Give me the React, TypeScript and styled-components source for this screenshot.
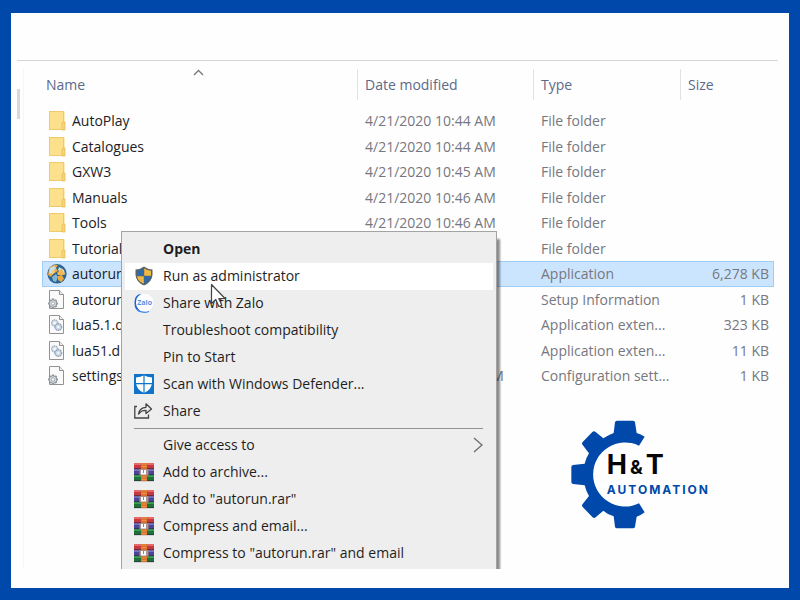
import React from "react";
import styled, { createGlobalStyle, css } from "styled-components";

const GlobalStyle = createGlobalStyle`
  * { box-sizing: border-box; }
  body { margin: 0; background: #fff; }
`;

const Frame = styled.main`
  min-height: 100vh;
  display: flex;
  flex-direction: column;
  padding: 47px 11px 19px 6px;
  border: solid #0049ab;
  border-width: 13px 11px 12px;
  background: #fefefe;
  font-family: "Open Sans", "Noto Sans", sans-serif;
  font-size: 14px;
  line-height: 20px;
  color: #1c1c26;
`;

const Explorer = styled.section`
  position: relative;
  flex: 1;
  display: flex;
  border-top: 1px solid #d6d6d6;
  overflow: hidden;
`;

const ScrollGutter = styled.div`
  width: 7px;
  flex: none;
  margin-top: 8px;
  padding-top: 20px;
  border-right: 1px solid #f6f6f6;
`;

const ScrollThumb = styled.div`
  width: 3px;
  height: 30px;
  background: #d9d9d9;
`;

const Content = styled.div`
  flex: 1;
  min-width: 0;
  display: flex;
  flex-direction: column;
  padding: 0 4px 0 18px;
`;

const FileTable = styled.table`
  width: 100%;
  table-layout: fixed;
  border-collapse: collapse;
`;

const Column = styled.col<{ $width?: number }>`
  width: ${(p) => (p.$width ? `${p.$width}px` : "auto")};
`;

const HeadCell = styled.th`
  height: 47px;
  padding: 0;
  font-weight: 400;
  text-align: left;
  color: #5b6a8a;
`;

const HeadLabel = styled.div<{ $first?: boolean }>`
  position: relative;
  height: 31px;
  padding: 6px 0 0 ${(p) => (p.$first ? 3 : 7)}px;
  border-left: 1px solid ${(p) => (p.$first ? "transparent" : "#e2e2e2")};
`;

const SortArrow = styled.svg`
  position: absolute;
  top: 0;
  left: 50%;
  width: 11px;
  height: 7px;
  margin-left: -7px;
`;

const FileRow = styled.tr<{ $selected?: boolean }>`
  height: 25px;
  &:nth-child(odd) { height: 26px; }
  ${(p) =>
    p.$selected &&
    css`
      background: #cce5ff;
      outline: 1px solid #a0cdf5;
      outline-offset: -1px;
    `}
`;

const Cell = styled.td<{ $right?: boolean }>`
  padding: 0 ${(p) => (p.$right ? 5 : 0)}px 0 8px;
  text-align: ${(p) => (p.$right ? "right" : "left")};
  color: #777780;
  white-space: nowrap;
`;

const NameCell = styled.td`
  padding: 0 0 0 5px;
`;

const NameLabel = styled.div`
  display: flex;
  align-items: center;
  gap: 5px;
  white-space: nowrap;
`;

const FileIcon = styled.svg`
  width: 20px;
  height: 20px;
  flex: none;
`;

const Brand = styled.div`
  display: grid;
  align-self: flex-end;
  align-items: center;
  margin: 31px 64px 0 0;
`;

const Gear = styled.svg`
  grid-area: 1 / 1;
  width: 77px;
  height: 110px;
`;

const BrandText = styled.div`
  grid-area: 1 / 1;
  padding-left: 37px;
  font-family: Inter, "Open Sans", sans-serif;
  font-weight: 700;
`;

const BrandName = styled.div`
  display: flex;
  align-items: baseline;
  gap: 3px;
  font-size: 27px;
  line-height: 26px;
  color: #050505;
`;

const Ampersand = styled.span`
  font-size: 19px;
`;

const BrandSub = styled.div`
  font-size: 12px;
  line-height: 18px;
  letter-spacing: 2px;
  color: #0049ab;
`;

const ContextMenu = styled.div`
  position: absolute;
  top: 170px;
  left: 104px;
  width: 376px;
  padding: 4px 3px 6px;
  border: 1px solid #a3a3a3;
  background: #eeeeee;
  box-shadow: 4px 7px 2px -1px rgba(0, 0, 0, 0.45);
`;

const MenuItem = styled.button<{ $active?: boolean; $bold?: boolean }>`
  display: flex;
  align-items: center;
  gap: 9px;
  width: 100%;
  height: 27px;
  padding: 0 10px 2px 9px;
  border: 0;
  background: ${(p) => (p.$active ? "#ffffff" : "transparent")};
  font: inherit;
  font-weight: ${(p) => (p.$bold ? 700 : 400)};
  text-align: left;
  color: #1e1e1e;
`;

const MenuIcon = styled.span`
  width: 20px;
  height: 20px;
  flex: none;
  svg { display: block; width: 20px; height: 20px; }
`;

const MenuLabel = styled.span`
  flex: 1;
  white-space: nowrap;
`;

const Separator = styled.hr`
  height: 1px;
  margin: 3px 10px 3px 9px;
  border: 0;
  background: #929292;
`;

const Submenu = styled.svg`
  width: 10px;
  height: 16px;
`;

const Pointer = styled.svg`
  position: absolute;
  top: 222px;
  left: 193px;
  width: 17px;
  height: 25px;
`;

type Kind = "folder" | "app" | "config" | "dll";

const GEAR_TEETH = "M6 8.5v10M1 13.5h10M2.5 10l7 7M9.5 10l-7 7";

function KindIcon({ kind }: { kind: Kind }) {
  if (kind === "folder")
    return (
      <FileIcon viewBox="0 0 20 20" aria-hidden="true">
        <rect x="2" y="0" width="15.5" height="19" rx="1" fill="#fbd978" />
        <rect x="2.5" y="0.5" width="14" height="18" fill="#fde08c" stroke="#efca68" />
        <path d="M15 12l1-1h2v8h-3z" fill="#f8d374" stroke="#e6be5b" strokeWidth="0.8" />
      </FileIcon>
    );
  if (kind === "app")
    return (
      <FileIcon viewBox="0 0 20 20" aria-hidden="true">
        <circle cx="10" cy="9.8" r="9.7" fill="#2d6291" />
        <path d="M2 5Q5 0 11 1L9 4l2 3-5 3-2 3-3-2zM11 12l4-1 2 4-3 3-3-2z" fill="#e7aa42" />
        <path d="M3 4l4-2 2 2-4 5-3 1zM12 3l5 3 1 4-4-1-3-3z" fill="#c7e0ed" />
        <path d="M5 13l4-3 2 3-2 5-3-1z" fill="#82b7d8" />
        <path d="M10 9l5-5 1 4 3 2-3 1-5 0z" fill="#f2b94e" />
        <path d="M4 7l3-2 1 3-3 3z" fill="#f6d07c" />
      </FileIcon>
    );
  return (
    <FileIcon viewBox="0 0 20 20" aria-hidden="true">
      <path d="M2.5 0.5h10l4 4v14h-14z" fill="#fafafa" stroke="#929292" />
      <path d="M12.5 0.5v4h4" fill="#eee" stroke="#929292" />
      {kind === "config" ? (
        <>
          <path d={GEAR_TEETH} stroke="#8b9299" strokeWidth="2.2" />
          <circle cx="6" cy="13.5" r="3.8" fill="#d7dde1" stroke="#8b9299" />
          <circle cx="6" cy="13.5" r="1.7" fill="#fff" stroke="#8b9299" strokeWidth="0.8" />
        </>
      ) : (
        <>
          <circle cx="7.7" cy="8" r="3" fill="#dce6ef" stroke="#a3b2c1" strokeWidth="1.4" strokeDasharray="1.6 0.5" />
          <circle cx="11.3" cy="12" r="3.3" fill="#cddce9" stroke="#95a6b7" strokeWidth="1.4" strokeDasharray="1.6 0.5" />
          <circle cx="11.3" cy="12" r="1" fill="#fff" />
          <circle cx="7.7" cy="8" r="1" fill="#fff" />
        </>
      )}
    </FileIcon>
  );
}

const UacShield = () => (
  <svg viewBox="0 0 20 20" aria-hidden="true">
    <path d="M10 0.5Q13 3 18.5 3.5V9Q18 16 10 19.5 2 16 1.5 9V3.5Q7 3 10 .5z" fill="#5d6267" />
    <path d="M9.8 2.2V9.8H3V4.7Q7 4.4 9.8 2.2z" fill="#2c6cab" />
    <path d="M10.2 2.2V9.8H17V4.7Q13 4.4 10.2 2.2z" fill="#f0b840" />
    <path d="M3 10.2H9.8V17.8Q3.7 15 3 10.2z" fill="#f0b840" />
    <path d="M17 10.2H10.2V17.8Q16.3 15 17 10.2z" fill="#2c6cab" />
  </svg>
);

const ZaloIcon = () => (
  <svg viewBox="0 0 20 20" aria-hidden="true">
    <rect x="0.5" y="0.5" width="19" height="19" rx="8" fill="#dbe8fa" />
    <path d="M7 .8Q0 2 .5 10 .5 18 7 19.2L4 15Q2 10 4 5z" fill="#1c62d2" />
    <rect x="2" y="0.8" width="17.5" height="17.5" rx="8" fill="#fcfdff" />
    <path d="M3 16.5Q8 21 15 18.5" fill="none" stroke="#3f86e6" strokeWidth="1.2" />
    <text x="10.7" y="12.3" textAnchor="middle" fontSize="7" fontWeight="700" fill="#5b8fe0">
      Zalo
    </text>
  </svg>
);

const DefenderIcon = () => (
  <svg viewBox="0 0 20 20" aria-hidden="true">
    <rect width="20" height="20" fill="#0f73c9" />
    <path d="M10 1.2Q13 3.2 18 3.4V9Q17.5 15.7 10 19 2.5 15.7 2 9V3.4Q7 3.2 10 1.2z" fill="#fff" />
    <path d="M10 1v18M2 9.7h16" stroke="#0f73c9" strokeWidth="1.2" />
  </svg>
);

const ShareIcon = () => (
  <svg viewBox="0 0 20 20" fill="none" stroke="#444" strokeWidth="1.3" aria-hidden="true">
    <path d="M3 5.5H.8V17h13.7v-3.5" />
    <path d="M4.5 13Q5.5 6.5 12 6.3V2.8L17.5 8 12 12.5V9.3Q7.5 9 4.5 13z" strokeLinejoin="round" />
  </svg>
);

const RarIcon = () => (
  <svg viewBox="0 0 20 20" aria-hidden="true">
    <rect y="1" width="20" height="6" fill="#c8373f" />
    <rect y="1" width="20" height="2" fill="#e36a67" />
    <rect y="7" width="20" height="6" fill="#4c4497" />
    <rect y="7" width="20" height="2" fill="#7a70c0" />
    <rect y="13" width="20" height="6" fill="#1f7038" />
    <rect y="13" width="20" height="2" fill="#3ba052" />
    <path d="M0 6.7h20M0 12.7h20M0 18.7h20" stroke="#2b2433" strokeWidth="0.7" />
    <rect x="7" y="1" width="6" height="18" fill="#d9722d" />
    <path d="M7.5 2h5M7.5 4.5h5M7.5 15h5M7.5 17.5h5" stroke="#e8924a" />
    <rect x="5.5" y="7.2" width="9" height="6" fill="#a9958f" />
    <rect x="7" y="8" width="5" height="4.5" fill="#fff" />
    <rect x="9" y="8" width="1" height="3" fill="#888" />
  </svg>
);

interface FileEntry {
  name: string;
  kind: Kind;
  date?: string;
  type: string;
  size?: string;
  selected?: boolean;
}

const files: FileEntry[] = [
  { name: "AutoPlay", kind: "folder", date: "4/21/2020 10:44 AM", type: "File folder" },
  { name: "Catalogues", kind: "folder", date: "4/21/2020 10:44 AM", type: "File folder" },
  { name: "GXW3", kind: "folder", date: "4/21/2020 10:45 AM", type: "File folder" },
  { name: "Manuals", kind: "folder", date: "4/21/2020 10:46 AM", type: "File folder" },
  { name: "Tools", kind: "folder", date: "4/21/2020 10:46 AM", type: "File folder" },
  { name: "Tutorial", kind: "folder", type: "File folder" },
  { name: "autorun", kind: "app", type: "Application", size: "6,278 KB", selected: true },
  { name: "autorun", kind: "config", type: "Setup Information", size: "1 KB" },
  { name: "lua5.1.dll", kind: "dll", type: "Application exten...", size: "323 KB" },
  { name: "lua51.dll", kind: "dll", type: "Application exten...", size: "11 KB" },
  { name: "settings", kind: "config", date: "12/21/2020 10:46 AM", type: "Configuration sett...", size: "1 KB" },
];

interface MenuEntry {
  label: string;
  icon?: React.ReactNode;
  active?: boolean;
  bold?: boolean;
  submenu?: boolean;
}

const shellActions: MenuEntry[] = [
  { label: "Open", bold: true },
  { label: "Run as administrator", icon: <UacShield />, active: true },
  { label: "Share with Zalo", icon: <ZaloIcon /> },
  { label: "Troubleshoot compatibility" },
  { label: "Pin to Start" },
  { label: "Scan with Windows Defender...", icon: <DefenderIcon /> },
  { label: "Share", icon: <ShareIcon /> },
];

const archiveActions: MenuEntry[] = [
  { label: "Give access to", submenu: true },
  { label: "Add to archive...", icon: <RarIcon /> },
  { label: 'Add to "autorun.rar"', icon: <RarIcon /> },
  { label: "Compress and email...", icon: <RarIcon /> },
  { label: 'Compress to "autorun.rar" and email', icon: <RarIcon /> },
];

function MenuGroup({ items }: { items: MenuEntry[] }) {
  return (
    <>
      {items.map((item) => (
        <MenuItem key={item.label} type="button" role="menuitem" $active={item.active} $bold={item.bold}>
          <MenuIcon>{item.icon}</MenuIcon>
          <MenuLabel>{item.label}</MenuLabel>
          {item.submenu && (
            <Submenu viewBox="0 0 10 16" aria-hidden="true">
              <path d="M1 1l8 7-8 7" fill="none" stroke="#707070" strokeWidth="1.4" />
            </Submenu>
          )}
        </MenuItem>
      ))}
    </>
  );
}

export default function App() {
  return (
    <>
      <GlobalStyle />
      <Frame>
        <Explorer>
          <ScrollGutter>
            <ScrollThumb />
          </ScrollGutter>
          <Content>
            <FileTable>
              <colgroup>
                <Column />
                <Column $width={176} />
                <Column $width={147} />
                <Column $width={94} />
              </colgroup>
              <thead>
                <tr>
                  <HeadCell scope="col">
                    <HeadLabel $first>
                      Name
                      <SortArrow viewBox="0 0 11 7" aria-hidden="true">
                        <path d="M1 6l4.5-4.5L10 6" fill="none" stroke="#777" strokeWidth="1.3" />
                      </SortArrow>
                    </HeadLabel>
                  </HeadCell>
                  <HeadCell scope="col"><HeadLabel>Date modified</HeadLabel></HeadCell>
                  <HeadCell scope="col"><HeadLabel>Type</HeadLabel></HeadCell>
                  <HeadCell scope="col"><HeadLabel>Size</HeadLabel></HeadCell>
                </tr>
              </thead>
              <tbody>
                {files.map((file, index) => (
                  <FileRow key={index} $selected={file.selected}>
                    <NameCell>
                      <NameLabel>
                        <KindIcon kind={file.kind} />
                        {file.name}
                      </NameLabel>
                    </NameCell>
                    <Cell>{file.date}</Cell>
                    <Cell>{file.type}</Cell>
                    <Cell $right>{file.size}</Cell>
                  </FileRow>
                ))}
              </tbody>
            </FileTable>
            <Brand>
              <Gear viewBox="30 30 231 330" aria-hidden="true">
                <path
                  fill="#0049ab"
                  d="M237 107A96 96 0 1 0 237 280L254 307Q243 316 230 320L225 350Q224 355 219 355H171Q166 355 165 350L161 319Q145 315 130 302L107 322Q102 326 97 321L68 291Q64 287 68 282L87 258Q78 243 74 226L39 222Q34 221 34 216V171Q34 166 39 165L74 161Q78 144 87 130L68 105Q64 100 68 96L97 66Q102 62 107 66L130 85Q145 75 161 69L165 37Q166 32 171 32H219Q224 32 225 37L230 69Q243 72 254 80Z"
                />
              </Gear>
              <BrandText>
                <BrandName>
                  <span>H</span>
                  <Ampersand>&amp;</Ampersand>
                  <span>T</span>
                </BrandName>
                <BrandSub>AUTOMATION</BrandSub>
              </BrandText>
            </Brand>
          </Content>
          <ContextMenu role="menu">
            <MenuGroup items={shellActions} />
            <Separator />
            <MenuGroup items={archiveActions} />
          </ContextMenu>
          <Pointer viewBox="0 0 17 25" aria-hidden="true">
            <path
              d="M1.5 1.5v19l4.3-4 3 7 3-1.3-3-6.7h6.2z"
              fill="#fff"
              stroke="#444"
              strokeWidth="1.2"
              strokeLinejoin="round"
            />
          </Pointer>
        </Explorer>
      </Frame>
    </>
  );
}
